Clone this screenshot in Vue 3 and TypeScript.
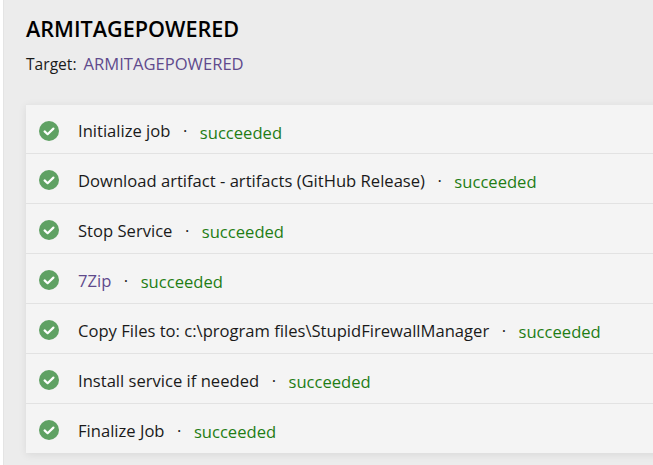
<script setup lang="ts">
const rows: { name: string; link?: boolean }[] = [
  { name: 'Initialize job' },
  { name: 'Download artifact - artifacts (GitHub Release)' },
  { name: 'Stop Service' },
  { name: '7Zip', link: true },
  { name: 'Copy Files to: c:\\program files\\StupidFirewallManager' },
  { name: 'Install service if needed' },
  { name: 'Finalize Job' },
]
</script>

<template>
  <div class="page">
    <div class="content">
      <h1 class="title">ARMITAGEPOWERED</h1>
      <div class="target">
        <span>Target:</span>
        <span class="link">ARMITAGEPOWERED</span>
      </div>
      <div class="card">
        <div v-for="r in rows" :key="r.name" class="row">
          <svg class="icon" width="20" height="20" viewBox="0 0 20 20">
            <circle cx="10" cy="10" r="10" fill="#5fa163" />
            <path d="M5.6 10.4 8.6 13.2 14.4 7.6" fill="none" stroke="#fff" stroke-width="2.2" stroke-linecap="round" stroke-linejoin="round" />
          </svg>
          <span class="name" :class="{ link: r.link }">{{ r.name }}</span>
          <span class="dot">·</span>
          <span class="status">succeeded</span>
        </div>
      </div>
    </div>
  </div>
</template>

<style>
html, body { margin: 0; padding: 0; }
</style>

<style scoped>
.page {
  width: 650px;
  height: 465px;
  overflow: hidden;
  background: #ececec;
  box-sizing: border-box;
  border-left: 1px solid #e4e4e4;
  margin-left: 3px;
  font-family: "Open Sans", "Noto Sans", sans-serif;
  color: #1a1a1a;
}
.content {
  padding: 15px 0 0 22px;
  width: 700px;
}
.title {
  margin: 0;
  font-size: 21.6px;
  line-height: 28px;
  font-weight: 600;
  color: #000;
}
.target {
  display: flex;
  gap: 7px;
  margin-top: 9px;
  font-size: 15.6px;
  line-height: 24px;
  height: 24px;
}
.target .link { font-size: 16.6px; }
.link { color: #5f4a8c; }
.card {
  margin-top: 28px;
  background: #f4f4f4;
  border-top: 1px solid #e6e6e6;
  box-shadow: 0 2px 8px rgba(0, 0, 0, 0.08);
}
.row {
  display: flex;
  align-items: center;
  padding: 3px 0 0 13px;
  box-sizing: border-box;
  height: 50px;
  font-size: 16.6px;
  border-bottom: 1px solid #e2e2e2;
}
.row:first-child { height: 49px; }
.row:last-child { height: 49px; border-bottom: none; }
.icon { flex: none; margin-right: 19px; }
.dot { margin: 0 12.5px; }
.status { color: #1f7d14; font-size: 16.6px; position: relative; top: 1.5px; }
</style>
